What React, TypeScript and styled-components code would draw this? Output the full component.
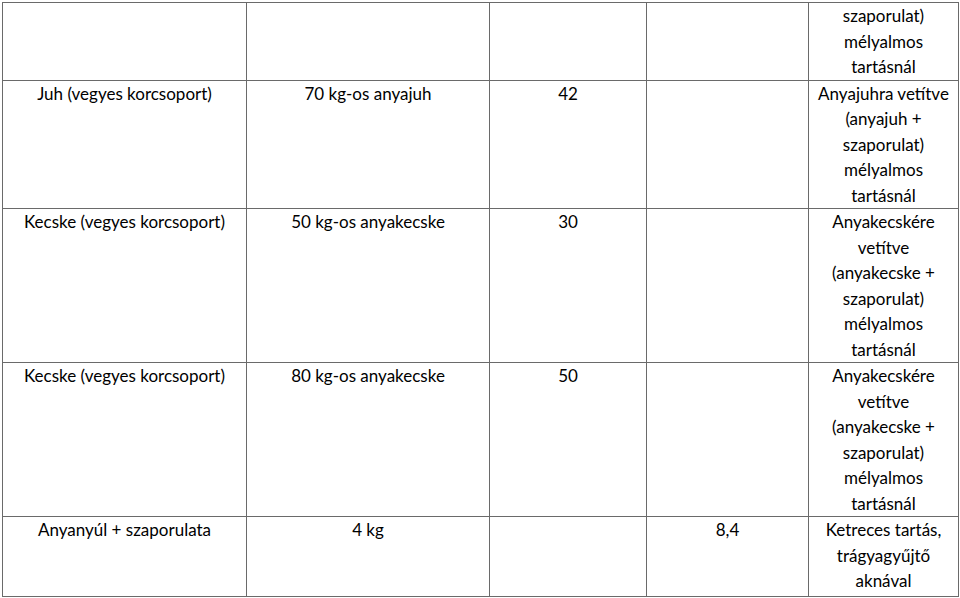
import React from 'react'
import styled, { createGlobalStyle } from 'styled-components'

const GlobalStyle = createGlobalStyle`
  html, body {
    margin: 0;
    padding: 0;
    background: #fff;
  }
`

const Page = styled.div`
  padding: 2px 0 0 2px;
  font-family: Lato, 'Open Sans', sans-serif;
  font-size: 17px;
  color: #000;
`

const Table = styled.table`
  width: 956px;
  border-collapse: collapse;
  table-layout: fixed;
`

const Cell = styled.td<{ $last?: boolean }>`
  border: 1px solid #6a6a6a;
  padding: 0 0 ${(p) => (p.$last ? '2px' : '0')};
  text-align: center;
  vertical-align: top;
  line-height: 25.5px;
  white-space: nowrap;
`

interface IRow {
  animal: string
  unit: string
  a: string
  b: string
  note: string[]
}

const widths: number[] = [244, 243, 157, 162, 150]

const rows: IRow[] = [
  { animal: '', unit: '', a: '', b: '', note: ['szaporulat)', 'mélyalmos', 'tartásnál'] },
  {
    animal: 'Juh (vegyes korcsoport)',
    unit: '70 kg-os anyajuh',
    a: '42',
    b: '',
    note: ['Anyajuhra vetítve', '(anyajuh +', 'szaporulat)', 'mélyalmos', 'tartásnál'],
  },
  {
    animal: 'Kecske (vegyes korcsoport)',
    unit: '50 kg-os anyakecske',
    a: '30',
    b: '',
    note: ['Anyakecskére', 'vetítve', '(anyakecske +', 'szaporulat)', 'mélyalmos', 'tartásnál'],
  },
  {
    animal: 'Kecske (vegyes korcsoport)',
    unit: '80 kg-os anyakecske',
    a: '50',
    b: '',
    note: ['Anyakecskére', 'vetítve', '(anyakecske +', 'szaporulat)', 'mélyalmos', 'tartásnál'],
  },
  {
    animal: 'Anyanyúl + szaporulata',
    unit: '4 kg',
    a: '',
    b: '8,4',
    note: ['Ketreces tartás,', 'trágyagyűjtő', 'aknával'],
  },
]

export default function App(): JSX.Element {
  return (
    <Page>
      <GlobalStyle />
      <Table>
        <colgroup>
          {widths.map((w: number, i: number) => (
            <col key={i} style={{ width: w }} />
          ))}
        </colgroup>
        <tbody>
          {rows.map((row: IRow, i: number) => {
            const last: boolean = i === rows.length - 1
            return (
              <tr key={i}>
                <Cell $last={last}>{row.animal}</Cell>
                <Cell $last={last}>{row.unit}</Cell>
                <Cell $last={last}>{row.a}</Cell>
                <Cell $last={last}>{row.b}</Cell>
                <Cell $last={last}>
                  {row.note.map((line: string, j: number) => (
                    <div key={j}>{line}</div>
                  ))}
                </Cell>
              </tr>
            )
          })}
        </tbody>
      </Table>
    </Page>
  )
}
